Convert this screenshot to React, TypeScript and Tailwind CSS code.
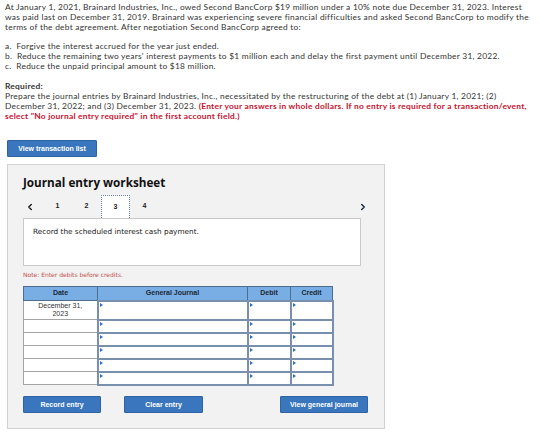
import { ChevronLeft, ChevronRight } from 'lucide-react';

const body = { fontFamily: 'Lato, "Open Sans", sans-serif' };
const ui = { fontFamily: '"Liberation Sans", Arial, sans-serif' };
const verdana = { fontFamily: '"DejaVu Sans", Verdana, sans-serif' };

const tabs = ['1', '2', '3', '4'];
const rows = [
  { date: ['December 31,', '2023'] },
  { date: [] },
  { date: [] },
  { date: [] },
  { date: [] },
  { date: [] },
];

function Marker() {
  return (
    <span className="absolute left-[1px] top-[1px] h-0 w-0 border-y-[2px] border-l-[3px] border-y-transparent border-l-[#2f6fc6]" />
  );
}

function BlueButton({ label, width }: { label: string; width: string }) {
  return (
    <button
      style={ui}
      className={`${width} block h-[17px] rounded-[1px] border border-[#2f63a3] bg-[#3a76bd] text-[7px] leading-[15px] font-bold text-white`}
    >
      {label}
    </button>
  );
}

export default function App() {
  return (
    <div className="h-[443px] w-[560px] overflow-hidden bg-white text-[#333]">
      <div style={body} className="px-[5px] pt-[2px] text-[8.4px] leading-[10px] tracking-[0.25px]">
        <p>
          At January 1, 2021, Brainard Industries, Inc., owed Second BancCorp $19 million under a 10% note due December 31, 2023. Interest
          <br />
          was paid last on December 31, 2019. Brainard was experiencing severe financial difficulties and asked Second BancCorp to modify the
          <br />
          terms of the debt agreement. After negotiation Second BancCorp agreed to:
        </p>

        <ul className="mt-[9px]">
          <li>a.&nbsp; Forgive the interest accrued for the year just ended.</li>
          <li>b.&nbsp; Reduce the remaining two years' interest payments to $1 million each and delay the first payment until December 31, 2022.</li>
          <li>c.&nbsp; Reduce the unpaid principal amount to $18 million.</li>
        </ul>

        <p className="mt-[10px] font-bold">Required:</p>
        <p>
          Prepare the journal entries by Brainard Industries, Inc., necessitated by the restructuring of the debt at (1) January 1, 2021; (2)
          <br />
          December 31, 2022; and (3) December 31, 2023.{' '}
          <span className="font-bold text-[#c8102e]">
            (Enter your answers in whole dollars. If no entry is required for a transaction/event,
            <br />
            select "No journal entry required" in the first account field.)
          </span>
        </p>
      </div>

      <div className="ml-[7px] mt-[19px] flex">
        <BlueButton label="View transaction list" width="w-[90px]" />
      </div>

      <div className="ml-[7px] mt-[7px] h-[265px] w-[378px] border border-[#d2d2d2] bg-[#f2f2f2] pl-[15px] pt-[10px]">
        <h2 style={{ fontFamily: '"Open Sans", Lato, sans-serif' }} className="text-[11.7px] font-bold leading-[15px] text-[#111]">
          Journal entry worksheet
        </h2>

        <div className="mt-[5px] flex h-[23px] w-[345px] items-center" style={ui}>
          <ChevronLeft className="ml-[2px] h-[10px] w-[10px] text-[#222]" strokeWidth={3.5} />
          <div className="ml-[8px] flex h-full">
            {tabs.map((t) => (
              <div
                key={t}
                className={
                  t === '3'
                    ? 'flex h-full w-[29px] items-center justify-center border-x border-t border-dotted border-[#6e86a8] bg-white text-[7px] font-bold text-[#222]'
                    : 'flex h-full w-[29px] items-center justify-center text-[7px] font-bold text-[#222]'
                }
              >
                {t}
              </div>
            ))}
          </div>
          <ChevronRight className="ml-auto h-[10px] w-[10px] text-[#1b2a44]" strokeWidth={3.5} />
        </div>

        <div className="h-[48px] w-[338px] border border-[#c9c9c9] bg-white pl-[9px] pt-[8px]">
          <p style={verdana} className="text-[7.3px] leading-[9px] text-[#222]">
            Record the scheduled interest cash payment.
          </p>
        </div>

        <p style={verdana} className="mt-[5px] text-[6px] leading-[8px] text-[#c0504d]">
          Note: Enter debits before credits.
        </p>

        <table style={ui} className="mt-[7px] w-[309px] table-fixed border-collapse">
          <colgroup>
            <col className="w-[74px]" />
            <col className="w-[150px]" />
            <col className="w-[43px]" />
            <col className="w-[42px]" />
          </colgroup>
          <thead>
            <tr className="h-[14px] bg-[#79aee4] text-[7px] font-bold text-[#1c2733]">
              <th className="border border-[#4f6d90] p-0 font-bold">Date</th>
              <th className="border border-[#4f6d90] p-0 font-bold">General Journal</th>
              <th className="border border-[#4f6d90] p-0 font-bold">Debit</th>
              <th className="border border-[#4f6d90] p-0 font-bold">Credit</th>
            </tr>
          </thead>
          <tbody>
            {rows.map((r, i) => (
              <tr key={i} className={i === 0 ? 'h-[19px]' : 'h-[13px]'}>
                <td className="border border-[#a3a3a3] bg-white p-0 text-center align-middle text-[7px] leading-[8px] text-[#333]">
                  {r.date.map((d) => (
                    <div key={d}>{d}</div>
                  ))}
                </td>
                <td className="relative border-2 border-[#7890ad] bg-white p-0">
                  <Marker />
                </td>
                <td className="relative border-2 border-[#7890ad] bg-white p-0">
                  <Marker />
                </td>
                <td className="relative border-2 border-[#7890ad] bg-white p-0">
                  <Marker />
                </td>
              </tr>
            ))}
          </tbody>
        </table>

        <div className="mt-[10px] flex w-[345px] items-start">
          <BlueButton label="Record entry" width="w-[78px]" />
          <div className="ml-[23px]">
            <BlueButton label="Clear entry" width="w-[79px]" />
          </div>
          <div className="ml-[77px]">
            <BlueButton label="View general journal" width="w-[88px]" />
          </div>
        </div>
      </div>
    </div>
  );
}
